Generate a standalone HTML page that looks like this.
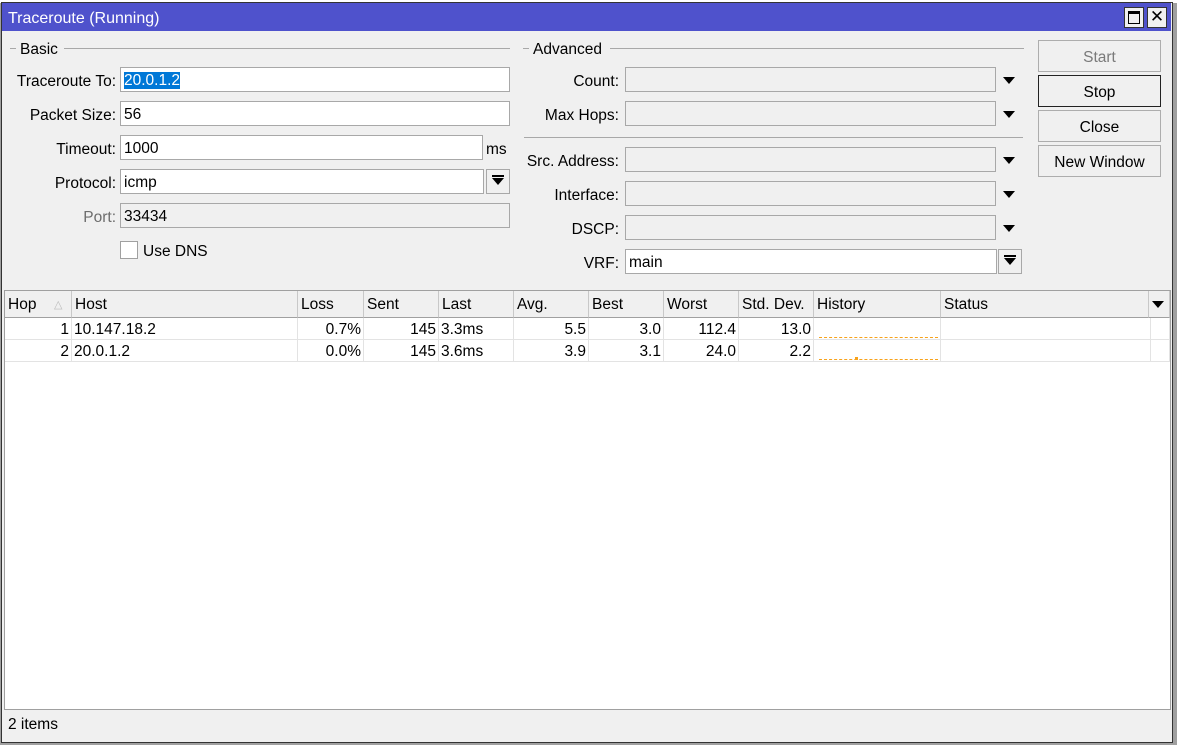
<!DOCTYPE html>
<html><head><meta charset="utf-8"><style>
*{box-sizing:border-box;margin:0;padding:0}
body{width:1177px;height:745px;background:#a0a0a0;position:relative;overflow:hidden;font-family:"Liberation Sans",sans-serif;font-size:15.5px;color:#000}
.a{position:absolute}
#top{left:0;top:0;width:1177px;height:3px;background:#fff}
#win{left:1px;top:2px;width:1172px;height:741px;background:#f0f0f0;border:1px solid #333}
#title{left:2px;top:3px;width:1169px;height:28px;background:#4f52cc;color:#fff;font-size:16px;padding:7px 0 0 6px}
.tb{top:7px;width:20px;height:21px;background:#f0f0f0;border:1px solid #333}
.lbl{text-align:right;height:24px;line-height:27px}
.in{height:25px;border:1px solid #a8a8a8;background:#fff;padding-left:3px;line-height:26px}
.dis{background:#f0f0f0}
.line{height:1px;background:#a8a8a8}
.arr{width:0;height:0;border-left:6px solid transparent;border-right:6px solid transparent;border-top:7px solid #000}
.btn{left:1038px;width:123px;height:32px;border:1px solid #adadad;background:#f0f0f0;text-align:center;line-height:33px}
.dd{width:24px;height:25px;border:1px solid #a8a8a8;background:#f0f0f0}
.dd:after{content:"";position:absolute;left:5px;top:8px;width:0;height:0;border-left:6px solid transparent;border-right:6px solid transparent;border-top:7px solid #000}
.dd:before{content:"";position:absolute;left:5px;top:5px;width:12px;height:2px;background:#000}
#tbl{left:4px;top:290px;width:1167px;height:420px;background:#fff;border:1px solid #a0a0a0}
.h{top:0;height:27px;background:#f0f0f0;border-right:1px solid #c8c8c8;border-bottom:1px solid #a0a0a0;line-height:28px;padding-left:3px}
.c{height:22px;line-height:23px;border-right:1px solid #e3e3e3;border-bottom:1px solid #e3e3e3;padding:0 2px}
.r{text-align:right}
.hist{left:5px;top:19px;width:119px;border-top:1px dashed #f7a21b}
</style></head><body>
<div class="a" id="top"></div>
<div class="a" id="win"></div>
<div class="a" id="title">Traceroute (Running)</div>
<div class="a tb" style="left:1124px"><div class="a" style="left:3px;top:3px;width:12px;height:13px;border:1px solid #000;border-top-width:3px"></div></div>
<div class="a tb" style="left:1147px;font-size:17px;text-align:center;line-height:18px">✕</div>

<div class="a line" style="left:10px;top:48px;width:6px"></div>
<div class="a" style="left:20px;top:41px">Basic</div>
<div class="a line" style="left:64px;top:48px;width:446px"></div>

<div class="a lbl" style="left:0;top:68px;width:116px">Traceroute To:</div>
<div class="a in" style="left:120px;top:67px;width:390px"><span style="background:#0078d7;color:#fff">20.0.1.2</span></div>
<div class="a lbl" style="left:0;top:102px;width:116px">Packet Size:</div>
<div class="a in" style="left:120px;top:101px;width:390px">56</div>
<div class="a lbl" style="left:0;top:136px;width:116px">Timeout:</div>
<div class="a in" style="left:120px;top:135px;width:363px">1000</div>
<div class="a" style="left:486px;top:141px">ms</div>
<div class="a lbl" style="left:0;top:170px;width:116px">Protocol:</div>
<div class="a in" style="left:120px;top:169px;width:364px">icmp</div>
<div class="a dd" style="left:486px;top:169px"></div>
<div class="a lbl" style="left:0;top:204px;width:116px;color:#6d6d6d">Port:</div>
<div class="a in dis" style="left:120px;top:203px;width:390px">33434</div>
<div class="a" style="left:120px;top:241px;width:18px;height:18px;border:1px solid #a0a0a0;background:#fff"></div>
<div class="a" style="left:143px;top:243px">Use DNS</div>

<div class="a line" style="left:523px;top:48px;width:6px"></div>
<div class="a" style="left:533px;top:41px">Advanced</div>
<div class="a line" style="left:610px;top:48px;width:414px"></div>

<div class="a lbl" style="left:500px;top:68px;width:119px">Count:</div>
<div class="a in dis" style="left:625px;top:67px;width:371px"></div>
<div class="a arr" style="left:1003px;top:77px"></div>
<div class="a lbl" style="left:500px;top:102px;width:119px">Max Hops:</div>
<div class="a in dis" style="left:625px;top:101px;width:371px"></div>
<div class="a arr" style="left:1003px;top:111px"></div>
<div class="a line" style="left:524px;top:137px;width:499px"></div>
<div class="a lbl" style="left:500px;top:148px;width:119px">Src. Address:</div>
<div class="a in dis" style="left:625px;top:147px;width:371px"></div>
<div class="a arr" style="left:1003px;top:157px"></div>
<div class="a lbl" style="left:500px;top:182px;width:119px">Interface:</div>
<div class="a in dis" style="left:625px;top:181px;width:371px"></div>
<div class="a arr" style="left:1003px;top:191px"></div>
<div class="a lbl" style="left:500px;top:216px;width:119px">DSCP:</div>
<div class="a in dis" style="left:625px;top:215px;width:371px"></div>
<div class="a arr" style="left:1003px;top:225px"></div>
<div class="a lbl" style="left:500px;top:250px;width:119px">VRF:</div>
<div class="a in" style="left:625px;top:249px;width:372px">main</div>
<div class="a dd" style="left:998px;top:249px"></div>

<div class="a btn" style="top:40px;color:#7a7a7a">Start</div>
<div class="a btn" style="top:75px;border-color:#222">Stop</div>
<div class="a btn" style="top:110px">Close</div>
<div class="a btn" style="top:145px">New Window</div>

<div class="a" id="tbl">
<div class="a h" style="left:0;width:67px">Hop<span style="position:absolute;left:49px;color:#bbb;font-size:11px">△</span></div>
<div class="a h" style="left:67px;width:226px">Host</div>
<div class="a h" style="left:293px;width:66px">Loss</div>
<div class="a h" style="left:359px;width:75px">Sent</div>
<div class="a h" style="left:434px;width:75px">Last</div>
<div class="a h" style="left:509px;width:75px">Avg.</div>
<div class="a h" style="left:584px;width:75px">Best</div>
<div class="a h" style="left:659px;width:75px">Worst</div>
<div class="a h" style="left:734px;width:75px">Std. Dev.</div>
<div class="a h" style="left:809px;width:127px">History</div>
<div class="a h" style="left:936px;width:208px">Status</div>
<div class="a h" style="left:1144px;width:21px"><div class="a arr" style="left:3px;top:10px"></div></div>

<div class="a c r" style="left:0;top:27px;width:67px">1</div>
<div class="a c" style="left:67px;top:27px;width:226px">10.147.18.2</div>
<div class="a c r" style="left:293px;top:27px;width:66px">0.7%</div>
<div class="a c r" style="left:359px;top:27px;width:75px">145</div>
<div class="a c" style="left:434px;top:27px;width:75px">3.3ms</div>
<div class="a c r" style="left:509px;top:27px;width:75px">5.5</div>
<div class="a c r" style="left:584px;top:27px;width:75px">3.0</div>
<div class="a c r" style="left:659px;top:27px;width:75px">112.4</div>
<div class="a c r" style="left:734px;top:27px;width:75px">13.0</div>
<div class="a c" style="left:809px;top:27px;width:127px"><div class="a hist"></div></div>
<div class="a c" style="left:936px;top:27px;width:210px"></div>
<div class="a c" style="left:1146px;top:27px;width:19px"></div>

<div class="a c r" style="left:0;top:49px;width:67px">2</div>
<div class="a c" style="left:67px;top:49px;width:226px">20.0.1.2</div>
<div class="a c r" style="left:293px;top:49px;width:66px">0.0%</div>
<div class="a c r" style="left:359px;top:49px;width:75px">145</div>
<div class="a c" style="left:434px;top:49px;width:75px">3.6ms</div>
<div class="a c r" style="left:509px;top:49px;width:75px">3.9</div>
<div class="a c r" style="left:584px;top:49px;width:75px">3.1</div>
<div class="a c r" style="left:659px;top:49px;width:75px">24.0</div>
<div class="a c r" style="left:734px;top:49px;width:75px">2.2</div>
<div class="a c" style="left:809px;top:49px;width:127px"><div class="a hist"></div><div class="a" style="left:41px;top:17px;width:3px;height:3px;background:#f7a21b"></div></div>
<div class="a c" style="left:936px;top:49px;width:210px"></div>
<div class="a c" style="left:1146px;top:49px;width:19px"></div>
</div>
<div class="a" style="left:8px;top:716px">2 items</div>
</body></html>
